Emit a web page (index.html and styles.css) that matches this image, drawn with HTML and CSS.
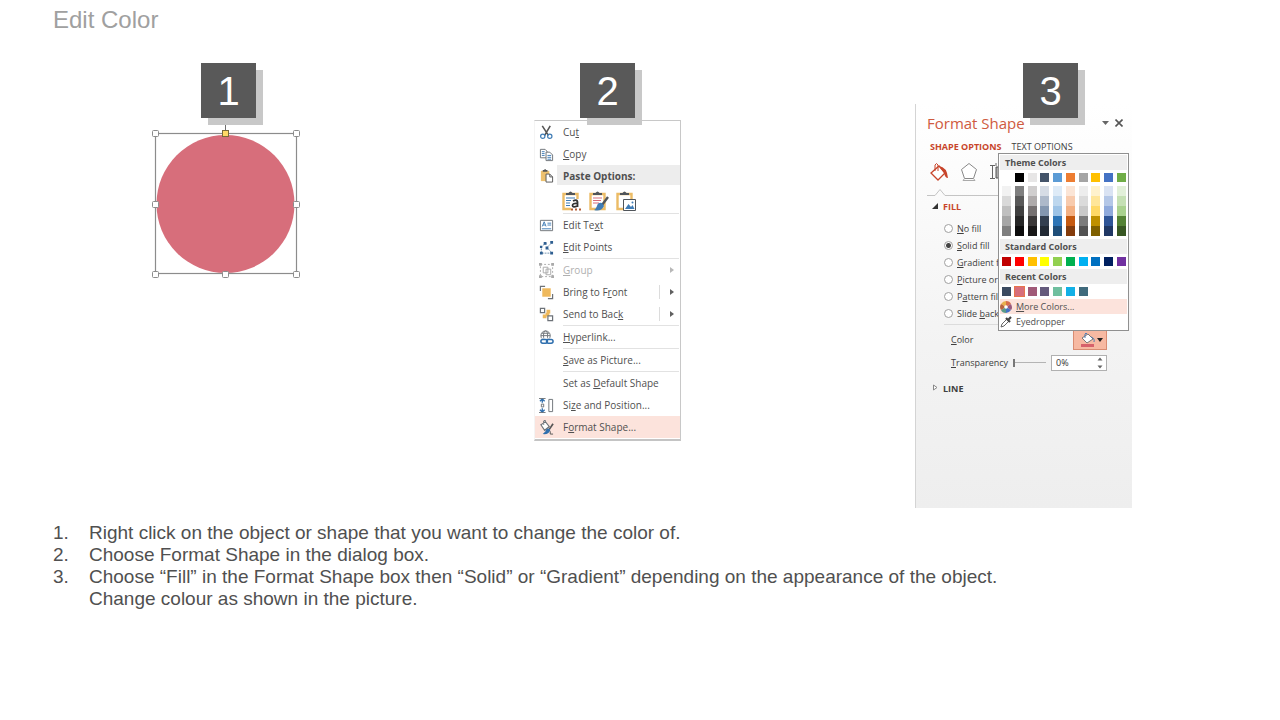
FILE: index.html
```html
<!DOCTYPE html>
<html lang="en">
<head>
<meta charset="utf-8">
<title>Edit Color</title>
<link rel="stylesheet" href="styles.css">
</head>
<body>
<main class="slide">
  <h1 class="title">Edit Color</h1>

  <div class="steps">
    <section class="step step-shape">
      <svg class="selection" viewBox="0 0 150 164" width="150" height="164" role="img" aria-label="Selected circle">
        <circle cx="75" cy="7" r="4" fill="#fff" stroke="#8c8c8c"/>
        <path d="M75.500 11V23" stroke="#6e6e6e"/>
        <circle cx="75.500" cy="94" r="69" fill="#d76e7b"/>
        <rect x="5.500" y="23.500" width="141" height="140" fill="none" stroke="#8c8c8c" stroke-width="1.200"/>
        <g fill="#fff" stroke="#8c8c8c">
          <rect x="2.500" y="20.500" width="6" height="6" rx="1"/>
          <rect x="143.500" y="20.500" width="6" height="6" rx="1"/>
          <rect x="2.500" y="91.500" width="6" height="6" rx="1"/>
          <rect x="143.500" y="91.500" width="6" height="6" rx="1"/>
          <rect x="2.500" y="161.500" width="6" height="6" rx="1"/>
          <rect x="72.500" y="161.500" width="6" height="6" rx="1"/>
          <rect x="143.500" y="161.500" width="6" height="6" rx="1"/>
          <rect x="72.500" y="20.500" width="6" height="6" fill="#ffd966" stroke="#7a6a3a"/>
        </g>
      </svg>
      <span class="badge">1</span>
    </section>

    <section class="step step-menu">
      <div class="menu">
        <button class="item"><svg class="icon" viewBox="0 0 16 16"><path d="M3.500 1 10 11M12 1 6 11" stroke="#555" stroke-width="1.700" fill="none"/><circle cx="4" cy="12" r="2.300" fill="none" stroke="#3f7cb5" stroke-width="1.300"/><circle cx="11.500" cy="12" r="2.300" fill="none" stroke="#3f7cb5" stroke-width="1.300"/></svg><span>Cu<u>t</u></span></button>
        <button class="item"><svg class="icon" viewBox="0 0 16 16"><g fill="#fff" stroke="#6d7278"><path d="M1.500 2.500h5l2 2v7h-7z"/><path d="M7.500 5.500h4l3 3v6h-7z"/></g><path d="M3 5h3M3 7h3M3 9h3M9 9h4M9 11h4M9 13h4" stroke="#3f7cb5"/></svg><span><u>C</u>opy</span></button>
        <h2 class="item menu-head"><svg class="icon" viewBox="0 0 16 16"><path d="M2 3h9v11H2z" fill="#ecc06e"/><path d="M4 4V2h1.500q1-2 2 0H9v2z" fill="#555"/><path d="M7.500 6.500h4l3 3v5.500h-7z" fill="#fff" stroke="#555"/><path d="M11.500 6.500v3h3" fill="none" stroke="#555"/></svg><span>Paste Options:</span></h2>
        <div class="paste">
          <button aria-label="Use destination theme"><svg viewBox="0 0 22 22"><path d="M2.500 4h14v15h-14z" fill="#fff" stroke="#ecbc66" stroke-width="2.400"/><path d="M5 5V3h2.500q2-3 4 0H14v2z" fill="#50555a"/><path d="M5 8h9M5 10.500h8M5 13h4M5 15.500h4" stroke="#3f7cb5"/><path d="M10 9h11v12H10z" fill="#fff"/><path d="M12 11q4-2 4.500 1v5M16.500 13.500q-5-.5-5 2t5 .500" fill="none" stroke="#333" stroke-width="1.800"/><path d="M10 19.500h2M14 19.500h2M18 19.500h2" stroke="#b35c34" stroke-width="2"/></svg></button>
          <button aria-label="Keep source formatting"><svg viewBox="0 0 22 22"><path d="M2.500 4h14v15h-14z" fill="#fff" stroke="#ecbc66" stroke-width="2.400"/><path d="M5 5V3h2.500q2-3 4 0H14v2z" fill="#50555a"/><path d="M5 8h9M5 10.500h8M5 13h6" stroke="#d76e7b"/><path d="m20 7-6 8" stroke="#50555a" stroke-width="2.400"/><path d="M14 13q-4-1-5 3-1 3-3 4 7 2 10-4z" fill="#3f7cb5"/></svg></button>
          <button aria-label="Picture"><svg viewBox="0 0 22 22"><path d="M2.500 4h14v15h-14z" fill="#fff" stroke="#ecbc66" stroke-width="2.400"/><path d="M5 5V3h2.500q2-3 4 0H14v2z" fill="#50555a"/><path d="M8.500 9.500h12v11h-12z" fill="#fff" stroke="#50555a"/><path d="m10 19 3.500-5 2.500 3 1.500-2 2 4z" fill="#3f7cb5"/><circle cx="17.500" cy="12.500" r="1" fill="#3f7cb5"/></svg></button>
        </div>
        <hr>
        <button class="item"><svg class="icon" viewBox="0 0 16 16"><path d="M1.500 2.500h13v11h-13z" fill="#fff" stroke="#6d7278"/><path d="m3.500 9 2-5 2 5M4.200 7.500h2.600M9 5.500h4M9 7.500h4M3 11.500h10" fill="none" stroke="#3f7cb5"/></svg><span>Edit Te<u>x</u>t</span></button>
        <button class="item"><svg class="icon" viewBox="0 0 16 16"><path d="M2.500 14V8q1-3 5.500-4M14 2.500 8.500 8l5 5.500M3 14h10" fill="none" stroke="#6d8fae" stroke-dasharray="2 1"/><path d="M1 12.500h3v3H1zM12 12.500h3v3h-3zM12 1h3v3h-3zM5 2h3v3H5zM1 6h2.500v2.500H1zM7 7h3v3H7z" fill="#2f5f91"/></svg><span><u>E</u>dit Points</span></button>
        <hr>
        <button class="item" disabled><svg class="icon" viewBox="0 0 16 16"><g fill="none" stroke="#aaa"><path d="M4.500 4.500h5v6h-5zM7.500 6.500h5v6h-5z"/><path d="M1.500 1.500h13v13h-13z" stroke-dasharray="2 2"/></g><path d="M0 0h3v3H0zM13 0h3v3h-3zM0 13h3v3H0zM13 13h3v3h-3z" fill="#aaa"/></svg><span><u>G</u>roup</span><i class="arrow"></i></button>
        <button class="item split"><svg class="icon" viewBox="0 0 16 16"><path d="M1.500 6.500v-5h5M14.500 9.500v5h-5" fill="none" stroke="#6d7278" stroke-width="1.300"/><path d="M3.500 3.500h9v9h-9z" fill="#efb95c"/></svg><span>Bring to F<u>r</u>ont</span><i class="arrow"></i></button>
        <button class="item split"><svg class="icon" viewBox="0 0 16 16"><path d="M8 3h4v4H8zM4 8h4v4H4zM7 6h4v4H7z" fill="#efb95c"/><path d="M1.500 1.500h4.500v4.500H1.500zM9.500 9.500h5v5h-5z" fill="#fff" stroke="#6d7278" stroke-width="1.300"/></svg><span>Send to Bac<u>k</u></span><i class="arrow"></i></button>
        <hr>
        <button class="item"><svg class="icon" viewBox="0 0 16 16"><g fill="none" stroke="#6d7278"><circle cx="7" cy="6" r="5"/><ellipse cx="7" cy="6" rx="2.200" ry="5"/><path d="M2 6h10M3 3.500h8"/></g><path d="M1 9h15v6H1z" fill="#fff"/><g fill="none" stroke="#2f6fae" stroke-width="1.600"><rect x="2" y="10" width="7" height="4" rx="2"/><rect x="8" y="10" width="7" height="4" rx="2"/></g></svg><span><u>H</u>yperlink...</span></button>
        <hr>
        <button class="item"><span class="icon"></span><span><u>S</u>ave as Picture...</span></button>
        <hr>
        <button class="item"><span class="icon"></span><span>Set as <u>D</u>efault Shape</span></button>
        <button class="item"><svg class="icon" viewBox="0 0 16 16"><path d="M3.500 1v4M3.500 11v4M1 3.500 3.500 1 6 3.500M1 12.500 3.500 15 6 12.500" fill="none" stroke="#2f6fae" stroke-width="1.400"/><path d="M2.500 6.500h2.500v3H2.500zM10.500 1.500h4v13h-4z" fill="#fff" stroke="#6d7278"/><path d="M0 .500h7M0 15.500h7" stroke="#6d7278"/></svg><span>Si<u>z</u>e and Position...</span></button>
        <button class="item active"><svg class="icon" viewBox="0 0 16 16"><path d="m2 5 5-3 4 5-5 4zM5 5V1.500q1.500-2 2 0" fill="#fff" stroke="#6d7278" stroke-width="1.200"/><path d="m15 4-4 6" stroke="#555" stroke-width="1.800"/><path d="M11 9q-4 0-4 3l-3 3q6 1 8-4z" fill="#2f6fae"/><path d="M12 12v3h3" stroke="#555" fill="none"/></svg><span>F<u>o</u>rmat Shape...</span></button>
      </div>
      <span class="badge">2</span>
    </section>

    <section class="step step-panel">
      <div class="panel">
        <header class="panel-head">
          <h2 class="panel-title">Format Shape</h2>
          <button class="plain" aria-label="Pane options"><svg viewBox="0 0 8 8" width="8" height="8"><path d="M0 2h7L3.500 6z" fill="#666"/></svg></button>
          <button class="plain" aria-label="Close"><svg viewBox="0 0 8 8" width="8" height="8"><path d="m.500.500 7 7m0-7-7 7" stroke="#555" stroke-width="1.600"/></svg></button>
        </header>
        <nav class="tabs">
          <button class="tab current">SHAPE OPTIONS</button>
          <button class="tab">TEXT OPTIONS</button>
        </nav>
        <div class="kinds">
          <button class="plain" aria-label="Fill and line"><svg viewBox="0 0 20 20" width="20" height="20"><path d="m2 11 8-7 6 7-7 7z" fill="#fff" stroke="#c8452b" stroke-width="1.300"/><path d="M6 9V3q1.500-3 3 0v6" fill="none" stroke="#c8452b"/><path d="M10 4q8 1 9 12-3 0-4-5z" fill="#c8452b"/></svg></button>
          <button class="plain" aria-label="Effects"><svg viewBox="0 0 20 20" width="20" height="20"><path d="m10 1.500 7.500 6-3 9h-9l-3-9z" fill="#fff" stroke="#888"/><path d="M5.500 16.500 4 18.500h12l-1.500-2" fill="none" stroke="#aaa"/></svg></button>
          <button class="plain" aria-label="Size"><svg viewBox="0 0 20 20" width="20" height="20"><path d="M1 3.500h5M1 16.500h5M3.500 4v12M7 1v3" fill="none" stroke="#666"/><path d="M7 5h9v11H7z" fill="#aaa" stroke="#555"/></svg></button>
        </div>
        <svg class="notch" viewBox="0 0 80 8" width="80" height="8" aria-hidden="true"><path d="M0 6.500h8l5-6 5 6h62" fill="none" stroke="#c4c4c4"/></svg>
        <h3 class="group open"><svg viewBox="0 0 6 6" width="6" height="6"><path d="M6 0v6H0z" fill="#333"/></svg>FILL</h3>
        <div class="radios">
          <label><input type="radio" name="fill"><span><u>N</u>o fill</span></label>
          <label><input type="radio" name="fill" checked><span><u>S</u>olid fill</span></label>
          <label><input type="radio" name="fill"><span><u>G</u>radient fill</span></label>
          <label><input type="radio" name="fill"><span><u>P</u>icture or t</span></label>
          <label><input type="radio" name="fill"><span>P<u>a</u>ttern fill</span></label>
          <label><input type="radio" name="fill"><span>Slide <u>b</u>ackg</span></label>
        </div>
        <div class="row color-row">
          <span><u>C</u>olor</span>
          <button class="color-button" aria-label="Color"><svg viewBox="0 0 28 16" width="28" height="16"><path d="m6 6 6-4 5 5-6 4z" fill="#fff" stroke="#777"/><path d="M9 6V2q1-2 2 0M15 5q4 1 3 5" fill="none" stroke="#4d7fb5"/><path d="M5 12h13v3H5z" fill="#d7616b"/><path d="M21 6h6l-3 4z" fill="#222"/></svg></button>
        </div>
        <div class="row">
          <label for="transparency"><u>T</u>ransparency</label>
          <input class="slider" type="range" min="0" max="100" value="0" aria-label="Transparency slider">
          <span class="spin">
            <input id="transparency" type="text" value="0%">
            <svg viewBox="0 0 6 12" width="6" height="12"><path d="m.500 3.500 2.500-3 2.500 3zM.500 8.500l2.500 3 2.500-3z" fill="#666"/></svg>
          </span>
        </div>
        <h3 class="group"><svg viewBox="0 0 6 8" width="6" height="8"><path d="M1.500 1v5L5 3.500z" fill="#fff" stroke="#888"/></svg>LINE</h3>

        <div class="picker">
          <h4>Theme Colors</h4>
          <div class="swatches" data-set="theme"></div>
          <div class="swatches shades" data-set="shades"></div>
          <h4>Standard Colors</h4>
          <div class="swatches" data-set="standard"></div>
          <h4>Recent Colors</h4>
          <div class="swatches" data-set="recent"></div>
          <button class="pick hot"><svg viewBox="0 0 12 12" width="12" height="12"><path d="M6 6 1 3q2-3 5-3z" fill="#e8b04c"/><path d="M6 6V0q4 0 5 3z" fill="#d76e4b"/><path d="m6 6 5-3q2 4 0 6z" fill="#9b5a7e"/><path d="m6 6 5 3q-2 3-5 3z" fill="#4472c4"/><path d="M6 6v6q-4 0-5-3z" fill="#5a9a8a"/><path d="M6 6 1 9q-2-3 0-6z" fill="#b7653e"/><circle cx="6" cy="6" r="1.800" fill="#fff"/></svg><span><u>M</u>ore Colors...</span></button>
          <button class="pick"><svg viewBox="0 0 12 12" width="12" height="12"><path d="m1 11 1-3 5-5 2 2-5 5z" fill="#fff" stroke="#666"/><path d="m6 2 4 4M8 4l3-3" stroke="#444" stroke-width="2.200"/></svg><span>Eyedropper</span></button>
        </div>
      </div>
      <span class="badge">3</span>
    </section>
  </div>

  <ol class="notes">
    <li>Right click on the object or shape that you want to change the color of.</li>
    <li>Choose Format Shape in the dialog box.</li>
    <li>Choose “Fill” in the Format Shape box then “Solid” or “Gradient” depending on the appearance of the object.<br>Change colour as shown in the picture.</li>
  </ol>
</main>
<script src="script.js"></script>
</body>
</html>
```
FILE: styles.css
```css
* { box-sizing: border-box; }

body {
  margin: 0;
  background: #fff;
  color: #505050;
  font-family: "Liberation Sans", Arial, sans-serif;
}

h1, h2, h3, h4, ol { margin: 0; padding: 0; font-weight: 400; }

button {
  border: 0;
  padding: 0;
  background: none;
  color: inherit;
  font: inherit;
  text-align: left;
}

u { text-underline-offset: 1px; }

.slide { padding: 6px 51px 24px 53px; }

.title {
  color: #a0a0a0;
  font-size: 24px;
  line-height: 28px;
}

.steps {
  display: grid;
  grid-template-columns: 344fr 421fr 411fr;
  justify-items: center;
  align-items: start;
  padding-top: 70px;
}

.step { position: relative; }
.step-shape { margin-top: 6px; }
.step-menu { margin-top: 16px; }

.badge {
  position: absolute;
  width: 55px;
  height: 55px;
  background: #595959;
  box-shadow: 7px 7px 0 #c8c8c8;
  color: #fff;
  font-size: 40px;
  line-height: 57px;
  text-align: center;
}

.step-shape .badge { left: 51px; top: -47px; }
.step-menu .badge { left: 46px; top: -57px; }
.step-panel .badge { left: 108px; top: -41px; }

.selection { display: block; overflow: visible; }

/* Context menu */
.menu {
  width: 147px;
  padding-bottom: 1px;
  border: 1px solid #c8c8c8;
  border-left-color: #f4f4f4;
  border-bottom: 2px solid #c4c4c4;
  background: #fff;
  color: #505050;
  font-family: "Open Sans", "Noto Sans", sans-serif;
  font-size: 10px;
}

.item {
  display: flex;
  align-items: center;
  gap: 9px;
  width: 100%;
  height: 22px;
  padding: 0 6px 0 4px;
  white-space: nowrap;
}

.item:disabled { color: #b0b0b0; }
.icon { flex: none; width: 15px; height: 15px; }

.menu-head {
  height: 21px;
  background: linear-gradient(#ededed, #ededed) 22px 0 / 100% 20px no-repeat;
  font-size: 10px;
  font-weight: 700;
}

.paste {
  display: flex;
  gap: 5px;
  height: 27px;
  padding: 3px 0 0 26px;
}

.paste svg { display: block; width: 22px; height: 22px; }

.menu hr {
  height: 1px;
  margin: 0 1px 0 28px;
  border: 0;
  background: #e2e2e2;
}

.arrow {
  margin-left: auto;
  border: 3px solid transparent;
  border-left: 4px solid #606060;
  border-right: 0;
}

.item:disabled .arrow { border-left-color: #b8b8b8; }

.split {
  background: linear-gradient(#dcdcdc, #dcdcdc) 124px 4px / 1px 14px no-repeat;
}

.active { background: #fce3dc; }

/* Format pane */
.panel {
  width: 217px;
  min-height: 404px;
  padding: 8px 0 0 11px;
  border-left: 1px solid #d4d4d4;
  background: linear-gradient(#fff, #f3f3f3 60%, #eee);
  color: #404040;
  font-family: "Open Sans", "Noto Sans", sans-serif;
  font-size: 9px;
}

.plain { display: block; }
.plain svg { display: block; }

.panel-head {
  display: flex;
  align-items: center;
  gap: 5px;
  height: 22px;
  padding-right: 9px;
}

.panel-title {
  flex: 1;
  color: #cf5a40;
  font-size: 15px;
  line-height: 22px;
}

.tabs { display: flex; gap: 10px; padding: 5px 0 0 3px; }
.tab { line-height: 16px; white-space: nowrap; }
.current { color: #c8452b; font-weight: 700; }

.kinds { display: flex; gap: 10px; padding: 7px 0 0 2px; }

.notch { display: block; margin-top: 7px; }

.group {
  display: flex;
  align-items: center;
  gap: 5px;
  height: 16px;
  margin-top: 1px;
  padding-left: 5px;
  font-size: 9px;
  font-weight: 700;
}

.open { color: #c8452b; }

.radios {
  display: grid;
  gap: 3px;
  width: 164px;
  margin-left: 17px;
  padding: 7px 0 4px;
  border-bottom: 1px solid #dcdcdc;
}

.radios label {
  display: flex;
  align-items: center;
  gap: 4px;
  width: 54px;
  height: 14px;
  overflow: hidden;
  white-space: nowrap;
}

.radios input {
  appearance: none;
  flex: none;
  width: 9px;
  height: 9px;
  margin: 0;
  border: 1px solid #a0a0a0;
  border-radius: 50%;
  background: #fff;
}

.radios input:checked {
  background: radial-gradient(#444 0 2px, #fff 3px);
}

.row {
  display: flex;
  align-items: center;
  height: 23px;
  padding: 0 25px 0 24px;
}

.color-row { justify-content: space-between; margin-top: 3px; }

.color-button {
  padding: 1px 2px;
  border: 1px solid #d98c72;
  background: #f7b9a2;
}

.color-button svg { display: block; }

.slider {
  appearance: none;
  flex: 1;
  min-width: 0;
  height: 9px;
  margin: 0 5px;
  background: linear-gradient(#b4b4b4, #b4b4b4) 0 4px / 100% 1px no-repeat;
}

.slider::-webkit-slider-thumb {
  appearance: none;
  width: 2px;
  height: 8px;
  background: #777;
}

.spin {
  display: flex;
  align-items: center;
  width: 56px;
  height: 16px;
  padding: 0 3px 0 4px;
  border: 1px solid #b0b0b0;
  background: #fff;
}

.spin input {
  flex: 1;
  min-width: 0;
  padding: 0;
  border: 0;
  background: none;
  color: #333;
  font: 9px "Open Sans", "Noto Sans", sans-serif;
}

.row + .group { margin-top: 6px; }

/* Color menu over the pane */
.picker {
  position: absolute;
  left: 83px;
  top: 49px;
  width: 131px;
  padding: 1px;
  border: 1px solid #909090;
  background: #fff;
  color: #505050;
}

.picker h4 {
  height: 15px;
  padding-left: 5px;
  background: #eee;
  font-size: 9px;
  font-weight: 700;
  line-height: 15px;
}

.swatches {
  display: grid;
  grid-template-columns: repeat(10, 9px);
  justify-content: space-between;
  padding: 3px 1px 3px 2px;
}

.swatches button { height: 9px; }
.shades { padding-top: 1px; }
.shades button { height: 10px; }
.chosen { outline: 1px solid #e8744c; }

.pick {
  display: flex;
  align-items: center;
  gap: 4px;
  width: 100%;
  height: 15px;
}

.hot { background: #fce3dc; }

/* Instructions */
.notes {
  padding: 14px 0 0 36px;
  font-size: 19px;
  line-height: 22px;
  list-style: none;
  counter-reset: note;
}

.notes li { counter-increment: note; }

.notes li::before {
  content: counter(note) ".";
  float: left;
  width: 36px;
  margin-left: -36px;
}
```
FILE: script.js
```js
const palettes = {
  theme: ["#ffffff", "#000000", "#e7e6e6", "#44546a", "#5b9bd5", "#ed7d31", "#a5a5a5", "#ffc000", "#4472c4", "#70ad47"],
  shades: [
    "#f2f2f2", "#7f7f7f", "#d0cece", "#d6dce5", "#deebf7", "#fbe5d6", "#ededed", "#fff2cc", "#dae3f3", "#e2f0d9",
    "#d9d9d9", "#595959", "#afabab", "#adb9ca", "#bdd7ee", "#f8cbad", "#dbdbdb", "#ffe699", "#b4c7e7", "#c5e0b4",
    "#bfbfbf", "#404040", "#767171", "#8497b0", "#9dc3e6", "#f4b183", "#c9c9c9", "#ffd966", "#8faadc", "#a9d18e",
    "#a6a6a6", "#262626", "#3b3838", "#333f50", "#2e75b6", "#c55a11", "#7b7b7b", "#bf9000", "#2f5597", "#548235",
    "#7f7f7f", "#0d0d0d", "#181717", "#222a35", "#1f4e79", "#843c0c", "#525252", "#7f6000", "#203864", "#385723"
  ],
  standard: ["#c00000", "#ff0000", "#ffc000", "#ffff00", "#92d050", "#00b050", "#00b0f0", "#0070c0", "#002060", "#7030a0"],
  recent: ["#3a4a60", "#d76e7b", "#a05a78", "#645a7c", "#6fbf9f", "#12b0e6", "#3f6a7c"]
};

document.querySelectorAll(".swatches").forEach((box) => {
  const set = box.dataset.set;
  palettes[set].forEach((color, index) => {
    const swatch = document.createElement("button");
    swatch.style.background = color;
    swatch.setAttribute("aria-label", color);
    if (set === "recent" && index === 1) swatch.className = "chosen";
    box.append(swatch);
  });
});
```
